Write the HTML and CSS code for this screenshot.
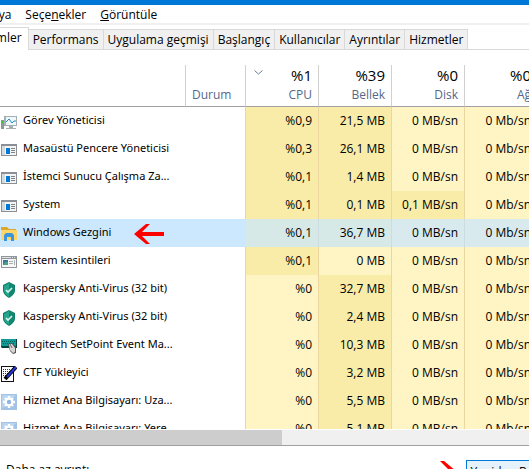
FILE: index.html
```html
<!DOCTYPE html>
<html lang="tr">

<head>
    <meta charset="UTF-8">
    <meta name="viewport" content="width=device-width, initial-scale=1.0">
    <title>Görev Yöneticisi</title>
    <link rel="stylesheet" href="styles.css">
</head>

<body>
    <svg width="0" height="0" class="defs">
        <symbol id="app" viewBox="0 0 16 16">
            <path fill="#8b9096" d="M0 2h16v12H0z" />
            <path fill="#f4f4f4" d="M1 4h14v9H1z" />
            <path fill="#d3dade" d="M1 4h3v9H1z" />
            <path fill="#0078d7" d="M5 6h4v6H5z" />
            <path fill="#7c8288" d="M10 6h4v1h-4zM10 8h4v1h-4zM10 10h4v1h-4z" />
        </symbol>
        <symbol id="shield" viewBox="0 0 16 16">
            <path fill="#0d7d69" d="M8 0l6 3v5c0 4-3 6-6 8-3-2-6-4-6-8V3z" />
            <path fill="#25a58d" d="M8 1l5 3v4c0 3-2 5-5 7-3-2-5-4-5-7V4z" />
            <path fill="#12866f" d="M8 1l5 3v4c0 3-2 5-5 7z" />
            <path fill="none" stroke="#d9f4ec" stroke-width="1.6" d="M5 8l2 2 4-4" />
        </symbol>
        <symbol id="gear" viewBox="0 0 16 16">
            <path fill="#a3c3e6" d="M0 0h16v16H0z" />
            <path fill="#b9d4f0" d="M1 1h14L1 15z" />
            <path stroke="#fff" stroke-width="2.4" d="M8 2v12M2 8h12M4 4l8 8M12 4l-8 8" />
            <circle cx="8" cy="8" r="4.4" fill="#fff" />
            <circle cx="8" cy="8" r="2.2" fill="#8fb6e0" />
        </symbol>
    </svg>

    <div class="window">
        <div class="title-bar"></div>
        <nav class="menu">
            <a href="#">Dosya</a>
            <a href="#">Seçe<u>n</u>ekler</a>
            <a href="#"><u>G</u>örüntüle</a>
        </nav>
        <div class="tabs">
            <button class="tab active">İşlemler</button>
            <button class="tab">Performans</button>
            <button class="tab">Uygulama geçmişi</button>
            <button class="tab">Başlangıç</button>
            <button class="tab">Kullanıcılar</button>
            <button class="tab">Ayrıntılar</button>
            <button class="tab">Hizmetler</button>
        </div>

        <div class="list">
            <table>
                <colgroup>
                    <col class="col-name">
                    <col class="col-status">
                    <col class="col-value">
                    <col class="col-value">
                    <col class="col-value">
                    <col class="col-value">
                </colgroup>
                <thead>
                    <tr>
                        <th></th>
                        <th class="status">Durum</th>
                        <th class="sorted"><svg class="chevron" viewBox="0 0 9 5"><path d="M0.5 0.5l4 3.5 4-3.5" /></svg><b>%1</b>CPU</th>
                        <th><b>%39</b>Bellek</th>
                        <th><b>%0</b>Disk</th>
                        <th><b>%0</b>Ağ</th>
                    </tr>
                </thead>
                <tbody>
                    <tr>
                        <td><svg class="icon" viewBox="0 0 16 16">
                                <path fill="#a8adb0" d="M3 2h13v10H3zM8 12h4v2h3v1H5v-1h3z" />
                                <path fill="#eef8fd" d="M5 3h10v8H5z" />
                                <path fill="none" stroke="#218fc4" d="M5 8l3-3 3 4 2-2h2" />
                                <path fill="#8f9698" d="M0 6h3v9H0z" />
                                <path fill="#2fd02f" d="M1 7h1v2H1z" />
                            </svg>Görev Yöneticisi</td>
                        <td></td>
                        <td class="warm">%0,9</td>
                        <td class="warm">21,5 MB</td>
                        <td>0 MB/sn</td>
                        <td>0 Mb/sn</td>
                    </tr>
                    <tr>
                        <td><svg class="icon"><use href="#app" /></svg>Masaüstü Pencere Yöneticisi</td>
                        <td></td>
                        <td class="warm">%0,3</td>
                        <td class="warm">26,1 MB</td>
                        <td>0 MB/sn</td>
                        <td>0 Mb/sn</td>
                    </tr>
                    <tr>
                        <td><svg class="icon"><use href="#app" /></svg>İstemci Sunucu Çalışma Za...</td>
                        <td></td>
                        <td class="warm">%0,1</td>
                        <td class="warm">1,4 MB</td>
                        <td>0 MB/sn</td>
                        <td>0 Mb/sn</td>
                    </tr>
                    <tr>
                        <td><svg class="icon"><use href="#app" /></svg>System</td>
                        <td></td>
                        <td class="warm">%0,1</td>
                        <td class="warm">0,1 MB</td>
                        <td class="warm">0,1 MB/sn</td>
                        <td>0 Mb/sn</td>
                    </tr>
                    <tr class="selected">
                        <td><svg class="icon" viewBox="0 0 16 16">
                                <path fill="#dda52c" d="M0 1h6l2 2h7v3H0z" />
                                <path fill="#ffd768" d="M0 4h16v10H0z" />
                                <path fill="#3b97dd" d="M3 15V9l2-2h6l2 2v6h-3v-4H6v4z" />
                            </svg>Windows Gezgini<svg class="arrow" viewBox="0 0 30 22">
                                <path d="M0 11L12 1h4L8 9h22v4H8l8 8h-4z" />
                            </svg></td>
                        <td></td>
                        <td class="warm">%0,1</td>
                        <td class="warm">36,7 MB</td>
                        <td>0 MB/sn</td>
                        <td>0 Mb/sn</td>
                    </tr>
                    <tr>
                        <td><svg class="icon" viewBox="0 0 16 16">
                                <path fill="#90969b" d="M0 2h16v12H0z" />
                                <path fill="#f5f6f6" d="M1 5h14v8H1z" />
                                <path fill="#dde1e4" d="M1 3h9v1H1zM11 3h1v1h-1zM13 3h1v1h-1z" />
                                <path fill="#3b76a0" d="M2 6h5v5H2z" />
                                <path fill="#4aa27f" d="M4 8h3v3H2z" />
                                <path fill="#aab0b4" d="M8 7h4v1H8zM8 9h4v1H8zM13 6h1v5h-1z" />
                            </svg>Sistem kesintileri</td>
                        <td></td>
                        <td class="warm">%0,1</td>
                        <td>0 MB</td>
                        <td>0 MB/sn</td>
                        <td>0 Mb/sn</td>
                    </tr>
                    <tr>
                        <td><svg class="icon"><use href="#shield" /></svg>Kaspersky Anti-Virus (32 bit)</td>
                        <td></td>
                        <td>%0</td>
                        <td class="warm">32,7 MB</td>
                        <td>0 MB/sn</td>
                        <td>0 Mb/sn</td>
                    </tr>
                    <tr>
                        <td><svg class="icon"><use href="#shield" /></svg>Kaspersky Anti-Virus (32 bit)</td>
                        <td></td>
                        <td>%0</td>
                        <td class="warm">2,4 MB</td>
                        <td>0 MB/sn</td>
                        <td>0 Mb/sn</td>
                    </tr>
                    <tr>
                        <td><svg class="icon" viewBox="0 0 16 16">
                                <path fill="#063f40" d="M0 1h16v9H1L0 9z" />
                                <path fill="#0d9c98" d="M0 1h15v7H0z" />
                                <path stroke="#075e5d" stroke-dasharray="1 1" d="M1 3.500h13M2 5.500h11" />
                                <path fill="#555" d="M7 6l4-1 4 4v6l-3 1-3-3z" />
                                <path fill="#d5d5d5" d="M8 6h3l3 4v4l-2 1-3-3z" />
                                <path stroke="#666" d="M9 6l2 4" />
                            </svg>Logitech SetPoint Event Ma...</td>
                        <td></td>
                        <td>%0</td>
                        <td class="warm">10,3 MB</td>
                        <td>0 MB/sn</td>
                        <td>0 Mb/sn</td>
                    </tr>
                    <tr>
                        <td><svg class="icon" viewBox="0 0 16 16">
                                <path fill="#111" d="M0 0h13v16H0z" />
                                <path fill="#fff" d="M1 1h11v14H1z" />
                                <path stroke="#333" stroke-dasharray="1 1" d="M2 3.500h8M2 5.500h8M2 7.500h7M2 9.500h4" />
                                <path stroke="#000" stroke-width="4" d="M4 13L15 1" />
                                <path stroke="#2436d8" stroke-width="2" d="M6 11L15 1" />
                            </svg>CTF Yükleyici</td>
                        <td></td>
                        <td>%0</td>
                        <td class="warm">3,2 MB</td>
                        <td>0 MB/sn</td>
                        <td>0 Mb/sn</td>
                    </tr>
                    <tr>
                        <td><svg class="icon"><use href="#gear" /></svg>Hizmet Ana Bilgisayarı: Uza...</td>
                        <td></td>
                        <td>%0</td>
                        <td class="warm">5,5 MB</td>
                        <td>0 MB/sn</td>
                        <td>0 Mb/sn</td>
                    </tr>
                    <tr>
                        <td><svg class="icon"><use href="#gear" /></svg>Hizmet Ana Bilgisayarı: Yere...</td>
                        <td></td>
                        <td>%0</td>
                        <td class="warm">5,1 MB</td>
                        <td>0 MB/sn</td>
                        <td>0 Mb/sn</td>
                    </tr>
                </tbody>
            </table>
        </div>
        <div class="scrollbar"><div class="thumb"></div></div>

        <footer class="footer">
            <a href="#">Daha az ayrıntı</a>
            <svg class="arrow" viewBox="0 0 30 22">
                <path d="M30 11L18 1h-4l8 8H0v4h22l-8 8h4z" />
            </svg>
            <button class="restart">Yeniden Başlat</button>
        </footer>
    </div>
</body>

</html>
```
FILE: styles.css
```css
* {
    box-sizing: border-box;
}

body {
    margin: 0;
    background-color: #fff;
    color: #000;
    font: 12px/16px "Open Sans", "Noto Sans", sans-serif;
}

.defs {
    position: absolute;
}

.window {
    display: flex;
    flex-direction: column;
    height: 100vh;
    overflow: hidden;
}

.title-bar {
    flex: none;
    height: 5px;
    background-color: #0078d7;
}

.menu {
    display: flex;
    flex: none;
    gap: 14px;
    height: 20px;
    margin-left: -23px;
    padding-top: 2px;
    border-bottom: 2px solid #f0f0f0;
}

.menu a,
.footer a {
    color: #000;
    text-decoration: none;
}

.tabs {
    display: flex;
    flex: none;
    align-items: flex-end;
    height: 25px;
    margin-left: -27px;
    border-bottom: 1px solid #d9d9d9;
}

.tab {
    height: 20px;
    padding: 1px 4px 0;
    border: 1px solid #d9d9d9;
    border-left: 0;
    border-bottom: 0;
    background-color: #f0f0f0;
    color: #000;
    font: inherit;
    white-space: nowrap;
}

.tab.active {
    height: 23px;
    margin-bottom: -1px;
    padding-right: 6px;
    padding-bottom: 3px;
    background-color: #fff;
}

.list {
    flex: 1;
    min-height: 0;
    padding-top: 15px;
    overflow: hidden;
}

table {
    width: 538px;
    table-layout: fixed;
    border-collapse: separate;
    border-spacing: 0;
}

.col-name {
    width: 186px;
}

.col-status {
    width: 60px;
}

.col-value {
    width: 73px;
}

th {
    position: relative;
    height: 42px;
    padding: 0 6px 3px 0;
    border-right: 1px solid #d0d0d0;
    border-bottom: 1px solid #a0a0a0;
    color: #56688a;
    font-weight: normal;
    text-align: right;
    vertical-align: bottom;
}

th b {
    display: block;
    margin-bottom: 2px;
    color: #000;
    font-size: 15px;
    font-weight: normal;
    line-height: 20px;
}

th.status {
    padding-left: 6px;
    text-align: left;
}

.chevron {
    position: absolute;
    top: 5px;
    left: 8px;
    width: 9px;
    height: 5px;
    fill: none;
    stroke: #6b7c98;
}

td {
    height: 28px;
    padding: 0 6px 0 0;
    border-right: 1px solid #ecd6a0;
    background-color: #fff4c4;
    text-align: right;
    white-space: nowrap;
}

td:nth-child(1),
td:nth-child(2) {
    border-right-color: transparent;
    background-color: #fff;
    text-align: left;
}

td:nth-child(2) {
    border-right-color: #ecd6a0;
}

td:nth-child(1) {
    padding-left: 1px;
    font-family: "Noto Sans", sans-serif;
    font-size: 11px;
}

td.warm {
    background-color: #f9eca8;
}

.selected td {
    border-right-color: #ccdcdf;
    background-color: #d9eaee;
}

.selected td:nth-child(1),
.selected td:nth-child(2) {
    border-right-color: #cce8ff;
    background-color: #cce8ff;
}

.selected td.warm {
    background-color: #d7e9e7;
}

.icon {
    width: 16px;
    height: 16px;
    margin-right: 6px;
    vertical-align: middle;
}

.arrow {
    width: 30px;
    height: 22px;
    margin: -4px 0 -4px 23px;
    fill: #f00;
    vertical-align: middle;
}

.scrollbar {
    flex: none;
    height: 17px;
    border-top: 1px solid #fff;
    border-bottom: 1px solid #a0a0a0;
    background-color: #f0f0f0;
}

.thumb {
    width: 282px;
    height: 15px;
    background-color: #cdcdcd;
}

.footer {
    display: flex;
    flex: none;
    align-items: flex-start;
    height: 23px;
    padding: 14px 0 0 6px;
}

.footer a {
    padding-top: 2px;
}

.footer .arrow {
    margin: 0 0 0 auto;
}

.restart {
    height: 23px;
    margin: 0 -28px 0 10px;
    padding: 0 3px;
    border: 1px solid #0078d7;
    background-color: #e5f1fb;
    color: #000;
    font: inherit;
    white-space: nowrap;
}
```
